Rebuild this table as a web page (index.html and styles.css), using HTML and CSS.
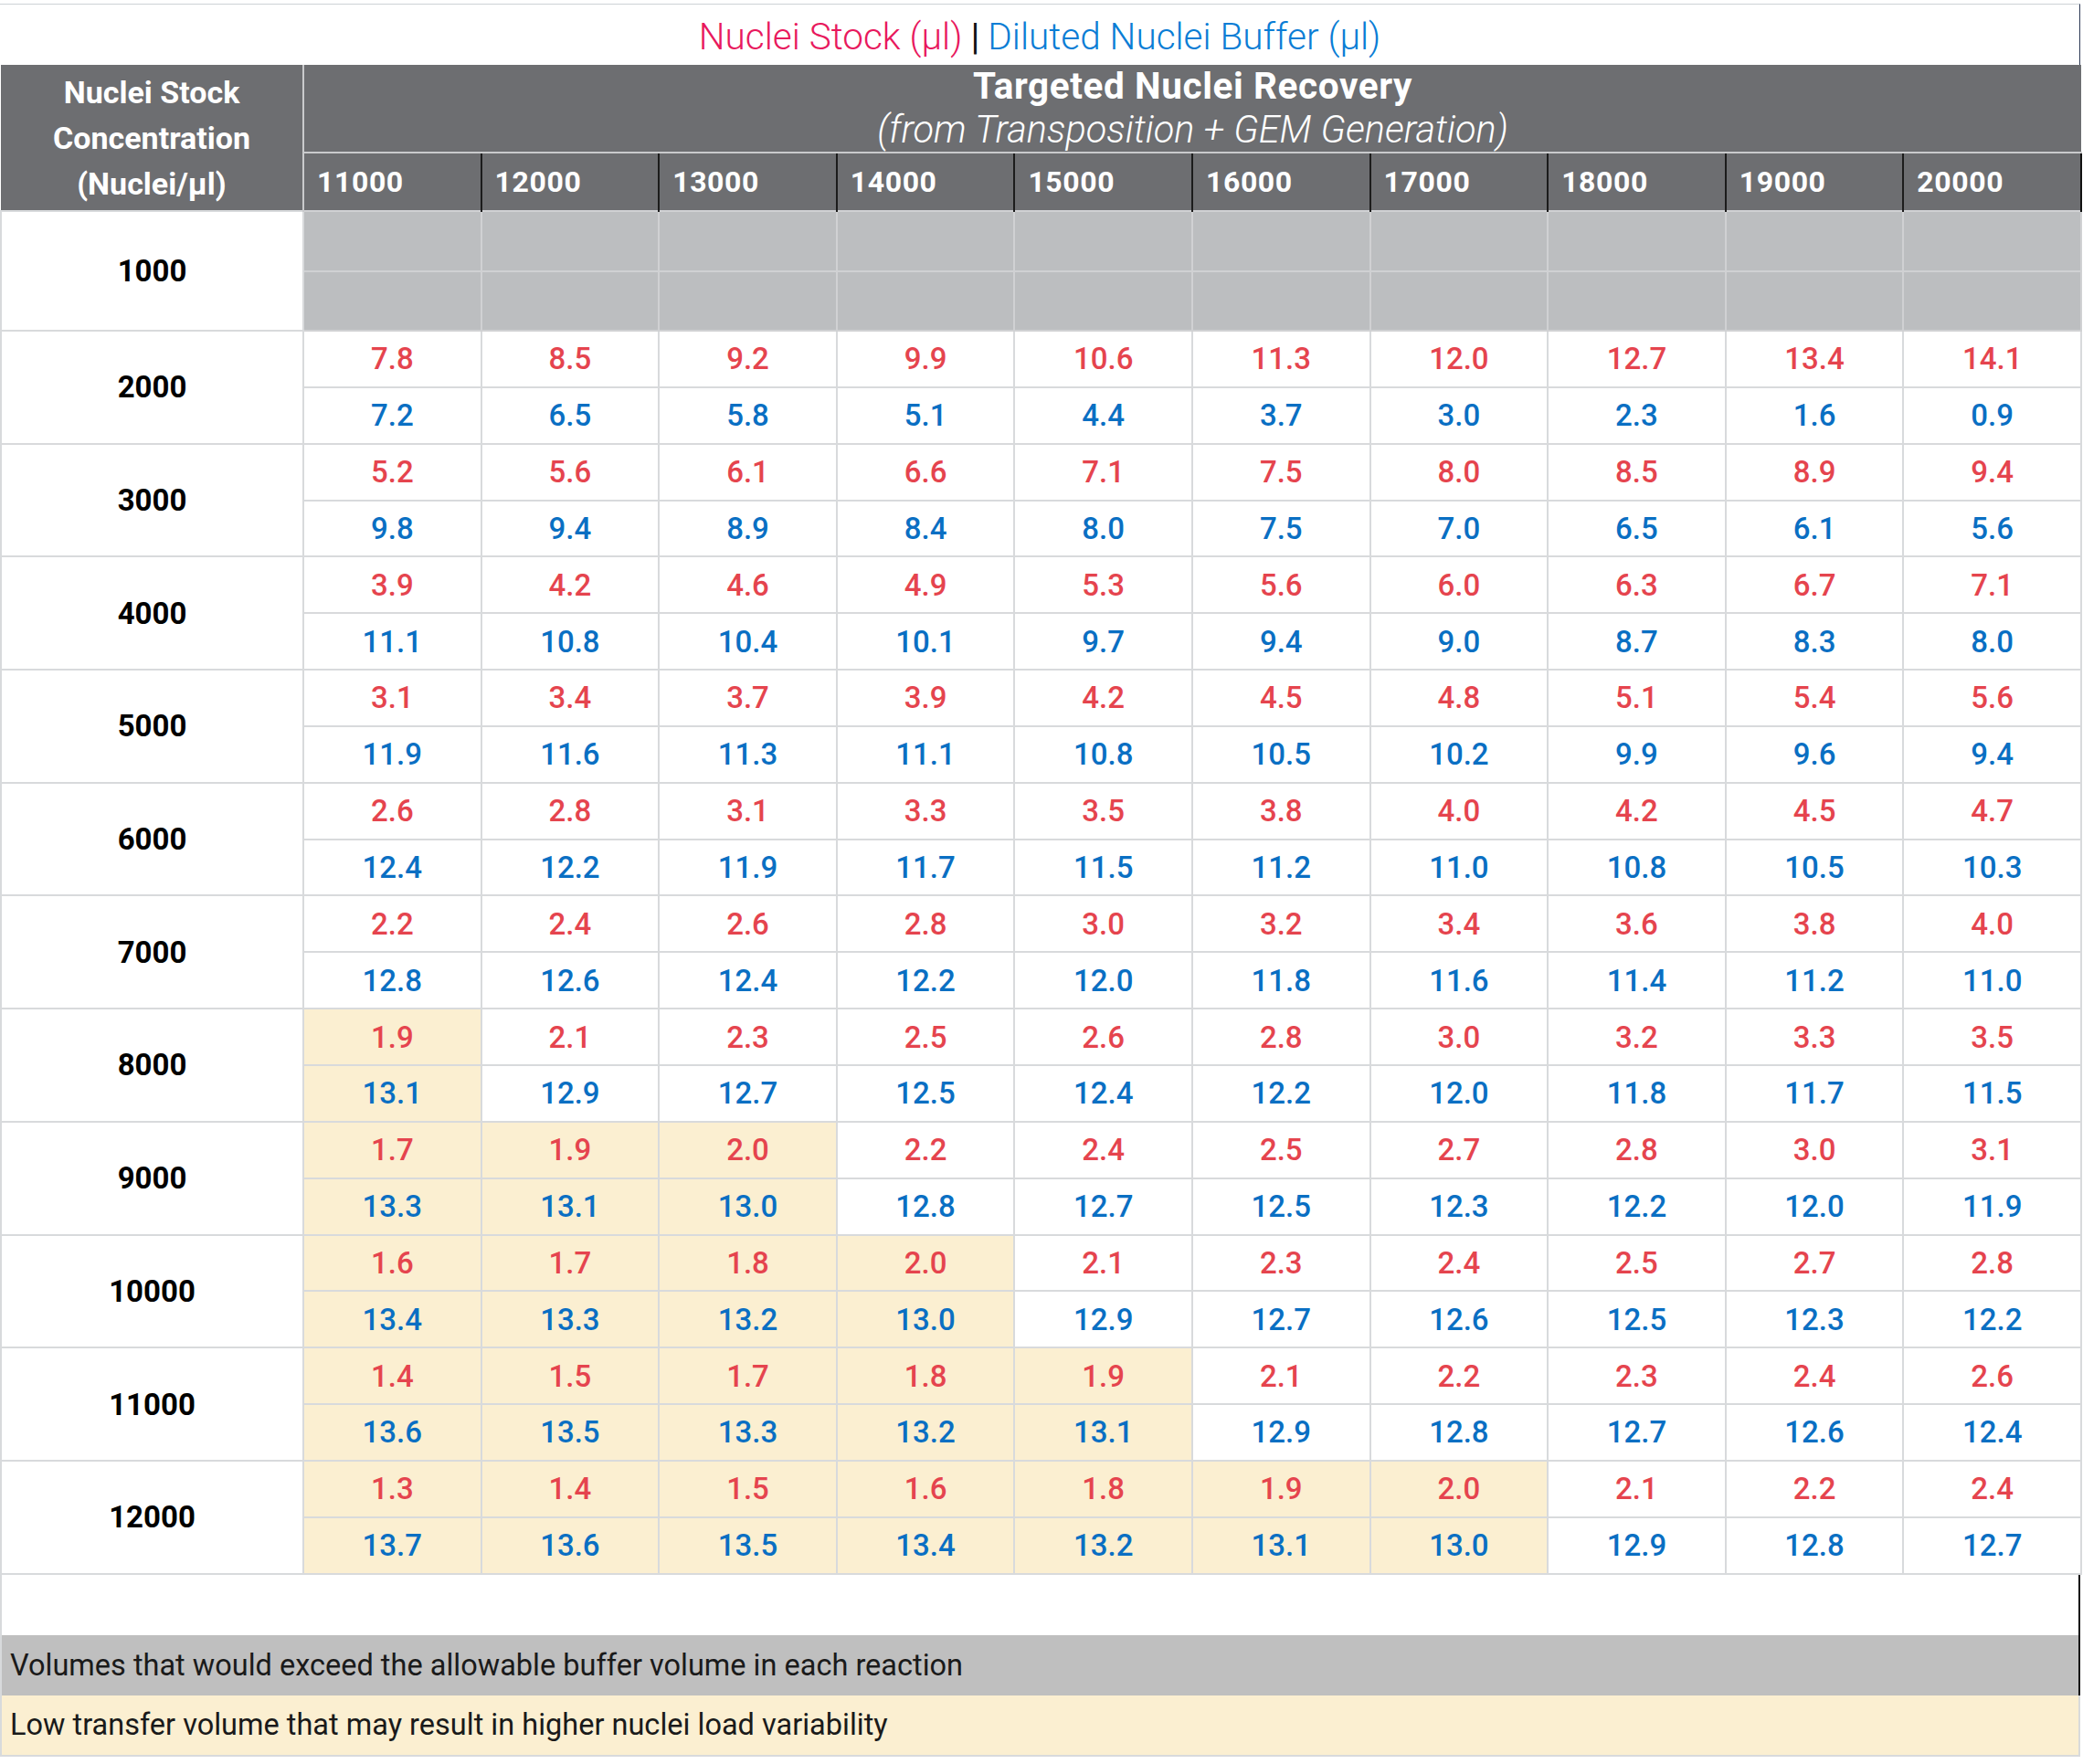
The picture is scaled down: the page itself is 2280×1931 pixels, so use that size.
FILE: index.html
```html
<!DOCTYPE html>
<html lang="en">
<head>
<meta charset="utf-8">
<title>Nuclei Stock Dilution Table</title>
<link rel="stylesheet" href="styles.css">
</head>
<body>
<div class="sheet">
  <div class="title"><span class="stock">Nuclei Stock (µl)</span> <span class="sep">|</span> <span class="buffer">Diluted Nuclei Buffer (µl)</span></div>
  <table class="grid">
    <colgroup>
      <col class="c-label">
      <col class="c-val"><col class="c-val"><col class="c-val"><col class="c-val"><col class="c-val">
      <col class="c-val"><col class="c-val"><col class="c-val"><col class="c-val"><col class="c-val">
    </colgroup>
    <thead>
      <tr>
        <th class="corner" rowspan="2">Nuclei Stock<br>Concentration<br>(Nuclei/µl)</th>
        <th class="recovery" colspan="10"><span class="main">Targeted Nuclei Recovery</span><span class="sub">(from Transposition + GEM Generation)</span></th>
      </tr>
      <tr>
        <th class="colhead first">11000</th><th class="colhead">12000</th><th class="colhead">13000</th><th class="colhead">14000</th><th class="colhead">15000</th>
        <th class="colhead">16000</th><th class="colhead">17000</th><th class="colhead">18000</th><th class="colhead">19000</th><th class="colhead last">20000</th>
      </tr>
    </thead>
    <tbody>
      <tr class="tall"><th class="rowlabel" rowspan="2">1000</th>
        <td class="x"></td><td class="x"></td><td class="x"></td><td class="x"></td><td class="x"></td><td class="x"></td><td class="x"></td><td class="x"></td><td class="x"></td><td class="x"></td></tr>
      <tr class="tall"><td class="x"></td><td class="x"></td><td class="x"></td><td class="x"></td><td class="x"></td><td class="x"></td><td class="x"></td><td class="x"></td><td class="x"></td><td class="x"></td></tr>

      <tr><th class="rowlabel" rowspan="2">2000</th>
        <td class="r">7.8</td><td class="r">8.5</td><td class="r">9.2</td><td class="r">9.9</td><td class="r">10.6</td><td class="r">11.3</td><td class="r">12.0</td><td class="r">12.7</td><td class="r">13.4</td><td class="r">14.1</td></tr>
      <tr><td class="b">7.2</td><td class="b">6.5</td><td class="b">5.8</td><td class="b">5.1</td><td class="b">4.4</td><td class="b">3.7</td><td class="b">3.0</td><td class="b">2.3</td><td class="b">1.6</td><td class="b">0.9</td></tr>

      <tr><th class="rowlabel" rowspan="2">3000</th>
        <td class="r">5.2</td><td class="r">5.6</td><td class="r">6.1</td><td class="r">6.6</td><td class="r">7.1</td><td class="r">7.5</td><td class="r">8.0</td><td class="r">8.5</td><td class="r">8.9</td><td class="r">9.4</td></tr>
      <tr><td class="b">9.8</td><td class="b">9.4</td><td class="b">8.9</td><td class="b">8.4</td><td class="b">8.0</td><td class="b">7.5</td><td class="b">7.0</td><td class="b">6.5</td><td class="b">6.1</td><td class="b">5.6</td></tr>

      <tr><th class="rowlabel" rowspan="2">4000</th>
        <td class="r">3.9</td><td class="r">4.2</td><td class="r">4.6</td><td class="r">4.9</td><td class="r">5.3</td><td class="r">5.6</td><td class="r">6.0</td><td class="r">6.3</td><td class="r">6.7</td><td class="r">7.1</td></tr>
      <tr><td class="b">11.1</td><td class="b">10.8</td><td class="b">10.4</td><td class="b">10.1</td><td class="b">9.7</td><td class="b">9.4</td><td class="b">9.0</td><td class="b">8.7</td><td class="b">8.3</td><td class="b">8.0</td></tr>

      <tr><th class="rowlabel" rowspan="2">5000</th>
        <td class="r">3.1</td><td class="r">3.4</td><td class="r">3.7</td><td class="r">3.9</td><td class="r">4.2</td><td class="r">4.5</td><td class="r">4.8</td><td class="r">5.1</td><td class="r">5.4</td><td class="r">5.6</td></tr>
      <tr><td class="b">11.9</td><td class="b">11.6</td><td class="b">11.3</td><td class="b">11.1</td><td class="b">10.8</td><td class="b">10.5</td><td class="b">10.2</td><td class="b">9.9</td><td class="b">9.6</td><td class="b">9.4</td></tr>

      <tr><th class="rowlabel" rowspan="2">6000</th>
        <td class="r">2.6</td><td class="r">2.8</td><td class="r">3.1</td><td class="r">3.3</td><td class="r">3.5</td><td class="r">3.8</td><td class="r">4.0</td><td class="r">4.2</td><td class="r">4.5</td><td class="r">4.7</td></tr>
      <tr><td class="b">12.4</td><td class="b">12.2</td><td class="b">11.9</td><td class="b">11.7</td><td class="b">11.5</td><td class="b">11.2</td><td class="b">11.0</td><td class="b">10.8</td><td class="b">10.5</td><td class="b">10.3</td></tr>

      <tr><th class="rowlabel" rowspan="2">7000</th>
        <td class="r">2.2</td><td class="r">2.4</td><td class="r">2.6</td><td class="r">2.8</td><td class="r">3.0</td><td class="r">3.2</td><td class="r">3.4</td><td class="r">3.6</td><td class="r">3.8</td><td class="r">4.0</td></tr>
      <tr><td class="b">12.8</td><td class="b">12.6</td><td class="b">12.4</td><td class="b">12.2</td><td class="b">12.0</td><td class="b">11.8</td><td class="b">11.6</td><td class="b">11.4</td><td class="b">11.2</td><td class="b">11.0</td></tr>

      <tr><th class="rowlabel" rowspan="2">8000</th>
        <td class="r y">1.9</td><td class="r">2.1</td><td class="r">2.3</td><td class="r">2.5</td><td class="r">2.6</td><td class="r">2.8</td><td class="r">3.0</td><td class="r">3.2</td><td class="r">3.3</td><td class="r">3.5</td></tr>
      <tr><td class="b y">13.1</td><td class="b">12.9</td><td class="b">12.7</td><td class="b">12.5</td><td class="b">12.4</td><td class="b">12.2</td><td class="b">12.0</td><td class="b">11.8</td><td class="b">11.7</td><td class="b">11.5</td></tr>

      <tr><th class="rowlabel" rowspan="2">9000</th>
        <td class="r y">1.7</td><td class="r y">1.9</td><td class="r y">2.0</td><td class="r">2.2</td><td class="r">2.4</td><td class="r">2.5</td><td class="r">2.7</td><td class="r">2.8</td><td class="r">3.0</td><td class="r">3.1</td></tr>
      <tr><td class="b y">13.3</td><td class="b y">13.1</td><td class="b y">13.0</td><td class="b">12.8</td><td class="b">12.7</td><td class="b">12.5</td><td class="b">12.3</td><td class="b">12.2</td><td class="b">12.0</td><td class="b">11.9</td></tr>

      <tr><th class="rowlabel" rowspan="2">10000</th>
        <td class="r y">1.6</td><td class="r y">1.7</td><td class="r y">1.8</td><td class="r y">2.0</td><td class="r">2.1</td><td class="r">2.3</td><td class="r">2.4</td><td class="r">2.5</td><td class="r">2.7</td><td class="r">2.8</td></tr>
      <tr><td class="b y">13.4</td><td class="b y">13.3</td><td class="b y">13.2</td><td class="b y">13.0</td><td class="b">12.9</td><td class="b">12.7</td><td class="b">12.6</td><td class="b">12.5</td><td class="b">12.3</td><td class="b">12.2</td></tr>

      <tr><th class="rowlabel" rowspan="2">11000</th>
        <td class="r y">1.4</td><td class="r y">1.5</td><td class="r y">1.7</td><td class="r y">1.8</td><td class="r y">1.9</td><td class="r">2.1</td><td class="r">2.2</td><td class="r">2.3</td><td class="r">2.4</td><td class="r">2.6</td></tr>
      <tr><td class="b y">13.6</td><td class="b y">13.5</td><td class="b y">13.3</td><td class="b y">13.2</td><td class="b y">13.1</td><td class="b">12.9</td><td class="b">12.8</td><td class="b">12.7</td><td class="b">12.6</td><td class="b">12.4</td></tr>

      <tr><th class="rowlabel" rowspan="2">12000</th>
        <td class="r y">1.3</td><td class="r y">1.4</td><td class="r y">1.5</td><td class="r y">1.6</td><td class="r y">1.8</td><td class="r y">1.9</td><td class="r y">2.0</td><td class="r">2.1</td><td class="r">2.2</td><td class="r">2.4</td></tr>
      <tr><td class="b y">13.7</td><td class="b y">13.6</td><td class="b y">13.5</td><td class="b y">13.4</td><td class="b y">13.2</td><td class="b y">13.1</td><td class="b y">13.0</td><td class="b">12.9</td><td class="b">12.8</td><td class="b">12.7</td></tr>
    </tbody>
  </table>
  <div class="spacer"></div>
  <div class="legend legend-gray">Volumes that would exceed the allowable buffer volume in each reaction</div>
  <div class="legend legend-yellow">Low transfer volume that may result in higher nuclei load variability</div>
</div>
</body>
</html>
```

FILE: styles.css
```css
html, body {
  margin: 0;
  padding: 0;
  background: #ffffff;
}

body {
  font-family: Roboto, "Liberation Sans", Arial, sans-serif;
  color: #000;
}

.sheet {
  width: 2277px;
  padding-top: 4px;
}

.title {
  box-sizing: border-box;
  height: 67px;
  padding-top: 4px;
  border-top: 1px solid #cdd2d6;
  border-right: 1px solid #2d3a55;
  display: flex;
  align-items: center;
  justify-content: center;
  font-size: 40.5px;
  font-weight: 300;
  gap: 9px;
}

.stock { color: #e8195d; }
.sep { color: #111; font-weight: 400; }
.buffer { color: #0a7dd5; }

.grid {
  width: 2277px;
  table-layout: fixed;
  border-collapse: collapse;
}

.c-label { width: 331px; }
.c-val { width: 194.6px; }

.grid thead th {
  background: #6d6e71;
  color: #fff;
  font-weight: 700;
  padding: 0;
}

.corner {
  font-size: 34px;
  line-height: 50px;
  text-align: center;
  border-right: 2px solid #c9cacc;
}

.recovery {
  height: 94px;
  border-bottom: 2px solid #c9cacc;
  text-align: center;
  vertical-align: middle;
}

.recovery .main {
  display: block;
  font-size: 40.5px;
  line-height: 47px;
  letter-spacing: 0.6px;
}

.recovery .sub {
  display: block;
  font-size: 41.5px;
  line-height: 48px;
  font-style: italic;
  font-weight: 300;
}

.colhead {
  height: 62px;
  text-align: left;
  padding-left: 14px !important;
  font-size: 32px;
  letter-spacing: 0.6px;
  border-left: 2px solid #1c1c1c;
}

.colhead.first { border-left: 2px solid #c9cacc; }
.colhead.last { border-right: 2px solid #111; }

.grid tbody th.rowlabel {
  background: #fff;
  font-size: 33px;
  font-weight: 700;
  text-align: center;
  border: 2px solid #d8dadc;
  padding: 0;
}

.grid tbody td {
  height: 59.85px;
  padding: 0;
  text-align: center;
  font-size: 33px;
  font-weight: 500;
  border: 2px solid #d8dadc;
}

.grid tbody tr.tall td { height: 63.5px; }

.grid td.r { color: #e5444e; }
.grid td.b { color: #0a6fc3; }
.grid td.x { background: #bcbec0; border-color: #d0d1d3; }
.grid td.y { background: #fbefd1; }

.spacer {
  box-sizing: border-box;
  height: 66px;
  border-left: 2px solid #d8dadc;
  border-right: 2px solid #111;
}

.legend {
  box-sizing: border-box;
  height: 66px;
  display: flex;
  align-items: center;
  padding-left: 9px;
  font-size: 32.5px;
  font-weight: 400;
  color: #1a1a1a;
  border-left: 2px solid #d8dadc;
}

.legend-gray {
  background: #bfbfbf;
  border-right: 2px solid #111;
}

.legend-yellow {
  background: #fbefd1;
  height: 67px;
  border-right: 2px solid #d8dadc;
  border-bottom: 2px solid #d8dadc;
}
```
